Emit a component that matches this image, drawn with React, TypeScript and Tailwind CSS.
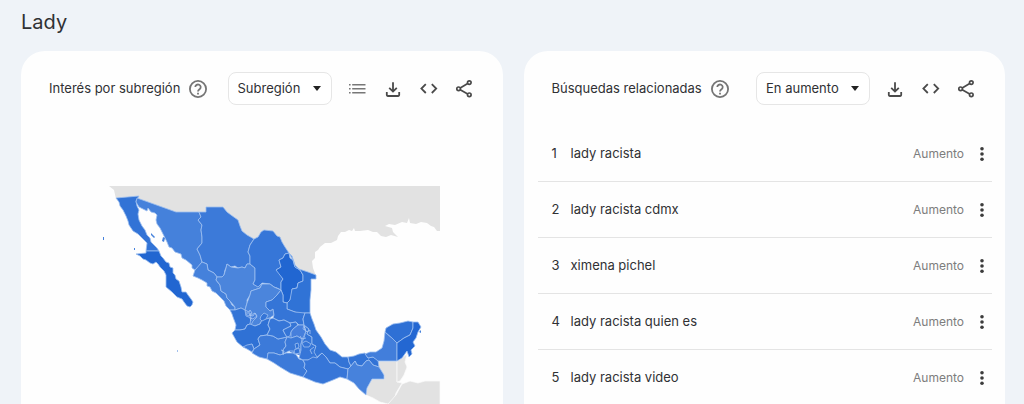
import type { ReactNode } from 'react';

const BASE = '#3a78d9';

const states: { name: string; fill: string; points: string }[] = [
  { name: 'Baja California', fill: '#3273d6', points: '116,198 139,196 136,201 137,206 139,210 138,214 139,220 142,226 145,230 147,235 150,238 151,242 155,246 157,248 159,251 146,251 147,243 144,240 142,238 138,234 133,231 129,225 128,221 126,216 123,210 120,206 119,202' },
  { name: 'Baja California Sur', fill: '#2166d1', points: '146,251 159,251 161,256 163,258 166,262 169,263 170,267 173,268 173,273 175,275 176,279 179,281 181,287 182,292 186,292 188,295 191,299 193,302 192,305 190,307 187,306 184,302 182,299 177,297 172,292 166,287 166,275 164,271 160,267 158,264 156,262 153,264 150,263 146,260 143,259 140,256 136,254 146,253' },
  { name: 'Sonora', fill: '#4581db', points: '137,198 176,212 199,212 201,217 198,220 202,225 201,230 202,237 202,243 197,249 200,255 202,262 199,266 195,270 192,268 192,265 186,260 182,258 181,254 175,252 172,248 169,247 167,242 165,238 162,232 160,228 157,224 156,220 157,215 155,213 151,212 148,208 147,211 143,209 139,207 136,202' },
  { name: 'Chihuahua', fill: '#3c7ad9', points: '199,212 206,212 206,207 223,207 227,212 231,215 238,220 240,226 242,231 247,235 254,239 252,242 250,245 248,252 250,256 250,264 247,264 245,268 242,267 238,268 235,266 231,267 227,264 226,268 225,270 224,275 222,277 217,277 214,273 208,270 207,264 202,262 200,255 197,249 202,243 202,237 201,230 202,225 198,220 201,217' },
  { name: 'Sinaloa', fill: '#4581db', points: '202,262 207,264 208,270 214,273 217,277 216,280 220,285 221,291 226,294 227,298 230,301 232,305 235,307 235,310 230,310 226,306 224,301 220,297 216,293 212,291 210,287 207,286 207,283 202,280 198,278 193,276 195,270' },
  { name: 'Durango', fill: '#4b85dc', points: '222,277 224,275 226,268 227,264 231,267 238,268 242,267 245,268 247,264 250,264 255,268 255,280 253,284 257,286 262,284 260,288 251,291 250,295 247,300 247,303 245,310 241,308 235,310 235,307 230,301 227,298 226,294 221,291 220,285 216,280 217,277' },
  { name: 'Coahuila', fill: '#3676d8', points: '254,239 258,237 261,232 264,230 273,231 277,236 280,237 282,242 285,247 289,253 285,254 283,258 279,260 281,267 276,270 280,274 283,279 281,282 281,290 277,288 274,287 270,284 262,283 258,287 253,284 255,280 255,268 250,264 250,256 248,252 250,245' },
  { name: 'Nuevo León', fill: '#2166d1', points: '289,253 290,258 293,260 295,267 300,270 303,275 303,281 298,283 297,288 292,289 292,295 290,300 287,303 283,302 283,295 281,290 281,282 283,279 276,270 281,267 279,260 283,258 285,254' },
  { name: 'Tamaulipas', fill: '#3073d6', points: '289,253 292,256 295,265 299,269 308,272 316,275 316,279 311,279 311,290 310,300 310,313 305,313 300,314 295,312 287,309 287,303 290,300 292,289 297,288 298,283 303,281 303,275 300,270 295,267 293,260' },
  { name: 'Zacatecas', fill: '#4b85dc', points: '262,284 270,284 274,287 281,290 277,295 272,300 266,302 266,307 270,311 273,309 274,315 270,318 262,320 260,324 255,326 251,325 253,321 257,317 255,313 249,316 245,314 245,310 247,303 250,295 251,291 260,288' },
  { name: 'San Luis Potosí', fill: '#3575d7', points: '281,290 283,295 283,302 287,303 287,309 295,312 305,313 303,319 304,325 299,325 296,322 290,323 284,320 279,321 273,318 274,315 273,309 270,311 266,307 266,302 272,300 277,295' },
  { name: 'Nayarit', fill: '#3374d6', points: '230,310 235,310 241,308 245,310 246,316 251,318 250,324 247,325 245,329 240,330 235,330 236,325 233,317 232,314' },
  { name: 'Jalisco', fill: '#2f71d5', points: '235,330 240,330 245,329 247,325 250,324 255,326 260,324 262,320 270,318 268,325 270,329 267,335 260,336 258,339 260,345 254,349 252,344 247,347 243,347 237,342 232,333' },
  { name: 'Colima', fill: '#3b79d8', points: '243,347 247,345 252,344 254,349 252,352 247,349' },
  { name: 'Michoacán', fill: '#3c7ad9', points: '260,336 267,335 273,336 278,339 287,337 285,342 286,346 283,350 283,355 280,355 274,353 268,353 268,357 267,359 259,357 252,353 254,349 260,345 258,339' },
  { name: 'Guanajuato', fill: '#3676d8', points: '270,319 273,318 279,321 284,320 290,323 291,326 287,328 283,330 285,334 287,337 278,339 273,336 267,335 270,329 268,325' },
  { name: 'Guerrero', fill: '#3c7ad9', points: '267,359 268,353 274,353 280,355 286,353 295,353 299,359 303,360 305,364 304,368 307,371 304,376 303,377 290,373 280,367 274,363' },
  { name: 'Querétaro', fill: '#3575d7', points: '283,330 287,328 291,326 290,323 296,322 298,325 293,329 291,332 290,336 287,337 285,334' },
  { name: 'Hidalgo', fill: '#467fdc', points: '291,332 293,329 298,325 304,325 303,329 306,331 304,336 302,339 297,336 291,338' },
  { name: 'Estado de México', fill: '#3b79d8', points: '287,337 291,338 297,336 302,339 301,344 301,349 299,353 294,354 293,351 289,351 283,354 283,350 286,346 285,342' },
  { name: 'Puebla', fill: '#3676d8', points: '304,325 309,329 307,334 312,337 312,344 316,346 315,352 320,355 317,358 308,360 303,360 299,358 301,350 301,344 304,338 306,331' },
  { name: 'Veracruz', fill: '#3374d6', points: '305,313 310,313 312,319 314,324 316,330 321,337 325,344 330,350 336,352 342,357 348,357 349,362 351,366 348,369 340,367 335,363 330,363 326,357 322,353 317,357 314,352 316,346 312,344 312,337 307,334 309,329 304,325 303,319' },
  { name: 'Oaxaca', fill: '#3776d8', points: '303,360 308,360 313,357 317,358 322,353 326,357 330,363 335,363 340,367 348,369 347,379 340,377 333,380 323,384 315,382 303,377 307,371 304,368 305,364' },
  { name: 'Tabasco', fill: '#3273d6', points: '348,357 354,356 359,354 365,353 368,358 373,357 378,360 379,367 373,365 369,360 366,361 362,366 357,365 355,361 351,366 349,362' },
  { name: 'Chiapas', fill: '#4782dc', points: '351,366 355,361 357,365 362,366 366,361 369,360 373,365 379,367 384,375 384,379 372,379 367,388 366,395 359,389 354,383 347,379 348,369' },
  { name: 'Campeche', fill: '#427edb', points: '365,354 370,352 376,352 382,348 384,341 385,332 392,338 397,343 397,361 378,361 373,357 368,358' },
  { name: 'Yucatán', fill: '#2e70d5', points: '385,332 386,328 393,324 400,323 408,321 413,322 413,328 410,335 404,338 397,343 392,338' },
  { name: 'Quintana Roo', fill: '#2367d2', points: '413,322 418,322 421,327 418,332 416,338 413,342 415,346 411,350 412,354 409,357 407,351 402,358 397,361 397,343 404,338 410,335 413,328' },
];

const unitedStates =
  '109,186 440,186 440,231 437,231 434,227 431,226 427,223 421,222 416,224 410,223 409,218 407,223 402,222 395,225 389,224 385,226 392,228 393,232 398,237 391,235 386,237 381,236 377,232 373,232 368,230 360,231 355,231 354,228 352,231 349,230 345,232 341,232 338,236 337,240 331,243 325,243 320,247 318,250 315,252 315,258 312,261 313,268 316,276 308,274 299,271 293,266 290,257 283,248 278,238 271,232 264,231 258,239 247,237 238,227 226,214 222,209 207,208 206,213 176,213 139,199 116,199 114,190';

const southernNeighbours = [
  '378,361 397,361 397,382 402,383 396,393 395,397 388,404 380,402 373,398 366,395 367,388 372,379 384,379 384,375 378,367',
  '397,361 402,358 407,354 405,362 407,367 404,375 400,381 397,382',
  '396,395 402,384 410,381 418,383 425,381 432,381 440,381 440,406 390,406 388,404',
];

function MexicoMap() {
  return (
    <svg viewBox="100 184 342 224" role="img" aria-label="Mapa de interés por subregión en México" className="w-[342px]">
      <polygon fill="#e2e2e2" points={unitedStates} />
      <g fill="#e2e2e2" stroke="#fafafa" strokeWidth="0.7" strokeLinejoin="round">
        {southernNeighbours.map((p) => (
          <polygon key={p} points={p} />
        ))}
      </g>
      <polygon fill={BASE} points="287,328 303,325 312,345 308,358 290,352 284,340" />
      <polygon fill="#427edb" points="236,309 262,305 268,319 252,325 240,322" />
      <g stroke="#9dbff0" strokeWidth="0.8" strokeLinejoin="round">
        {states.map((s) => (
          <polygon key={s.name} points={s.points} fill={s.fill} />
        ))}
        <polygon points="261,316 264,313 268,315 266,319 262,321 260,319" fill="#3575d7" />
        <polygon points="302,343 306,341 311,344 309,347 304,347" fill="#3575d7" />
        <polygon points="295,344 298,343 299,347 296,349" fill="#2f71d5" />
        <polygon points="294,350 299,348 300,353 295,354" fill="#3575d7" />
      </g>
      <path
        fill="none"
        stroke="#a9c7f2"
        strokeWidth="0.8"
        d="M245 310l4 2 1-2 2 3-3 2 4 1 2-3 2 3-4 3-3-1 1 3M246 313l4 0 1 5M304 329l3 3 3-2 0 4M300 336l2 3 4-1M314 347l-4 3 2 4M281 350l3 1-1 4"
      />
      <g fill="#4581db">
        <path d="M103 237h1v3h-1zM151 233l4 4-1 1-3-3zM163 237l2 1-1 4-2-1zM134 248h1v2h-1zM419 332l2-2v3z" />
        <path d="M177 350h1v2h-1z" opacity="0.5" />
      </g>
    </svg>
  );
}

function HelpIcon() {
  return (
    <svg viewBox="0 0 20 20" className="size-5" fill="none" stroke="#757575" strokeWidth="1.8" aria-hidden="true">
      <circle cx="10" cy="10" r="8.1" />
      <path d="M7.3 8.1a2.7 2.6 0 1 1 4.3 2.1c-.9.7-1.6 1.2-1.6 2.4" />
      <path d="M10 13.8v1.7" />
    </svg>
  );
}

function ListIcon() {
  return (
    <svg viewBox="0 0 20 20" className="size-5" stroke="#777777" strokeWidth="1.6" aria-hidden="true">
      <path d="M2 5.7H3.6M2 9.7H3.6M2 13.7H3.6M5.2 5.7h13.3M5.2 9.7h13.3M5.2 13.7h13.3" />
    </svg>
  );
}

function DownloadIcon() {
  return (
    <svg viewBox="0 0 20 20" className="size-5" fill="none" stroke="#4a4a4a" strokeWidth="1.8" aria-hidden="true">
      <path d="M10 3.2v9M6.2 8.8l3.8 3.8 3.8-3.8M3.8 13v3.1q0 .9.9.9h10.6q.9 0 .9-.9V13" />
    </svg>
  );
}

function EmbedIcon() {
  return (
    <svg viewBox="0 0 20 20" className="size-5" fill="none" stroke="#4a4a4a" strokeWidth="1.8" aria-hidden="true">
      <path d="M6.8 5.2L2.4 9.6l4.4 4.4M12.8 5.2l4.4 4.4-4.4 4.4" />
    </svg>
  );
}

function ShareIcon() {
  return (
    <svg viewBox="0 0 20 20" className="size-5" fill="none" stroke="#4a4a4a" strokeWidth="1.7" aria-hidden="true">
      <circle cx="3.6" cy="9.8" r="1.8" />
      <circle cx="14.3" cy="3.6" r="1.8" />
      <circle cx="14.3" cy="15.8" r="1.8" />
      <path d="M5.2 8.9l7.5-4.4M5.2 10.7l7.5 4.2" />
    </svg>
  );
}

function IconButton({ label, children }: { label: string; children: ReactNode }) {
  return (
    <button type="button" aria-label={label} className="flex size-9 items-center justify-center">
      {children}
    </button>
  );
}

function CardHeader({ title, option, width, withList }: { title: string; option: string; width: string; withList?: boolean }) {
  return (
    <header className="flex h-[75px] items-center justify-between pr-5 pl-7">
      <div className="flex items-center gap-2">
        <h2 className="text-[13px] whitespace-nowrap">{title}</h2>
        <button type="button" aria-label={`Ayuda: ${title}`}>
          <HelpIcon />
        </button>
      </div>
      <div className="flex items-center gap-[7px]">
        <div className={`relative ${width}`}>
          <select
            aria-label={title}
            className="h-[33px] w-full appearance-none rounded-lg border border-[#e6e6e6] bg-white pl-[9px] text-[13px]"
          >
            <option>{option}</option>
          </select>
          <svg viewBox="0 0 8 5" className="pointer-events-none absolute top-[14px] right-[11px] h-[5px] w-2" aria-hidden="true">
            <path d="M0 0h8L4 5z" fill="#222222" />
          </svg>
        </div>
        <div className="flex">
          {withList && (
            <IconButton label="Lista">
              <ListIcon />
            </IconButton>
          )}
          <IconButton label="Descargar">
            <DownloadIcon />
          </IconButton>
          <IconButton label="Insertar">
            <EmbedIcon />
          </IconButton>
          <IconButton label="Compartir">
            <ShareIcon />
          </IconButton>
        </div>
      </div>
    </header>
  );
}

const searches = ['lady racista', 'lady racista cdmx', 'ximena pichel', 'lady racista quien es', 'lady racista video'];

export default function App() {
  return (
    <main className="h-screen overflow-hidden bg-[#eff3f8] pr-[19px] pl-[21px] font-['Inter',sans-serif] text-[#303134]">
      <h1 className="flex h-[51px] items-center pb-2 text-[20px]">Lady</h1>
      <div className="grid grid-cols-2 gap-[21px]">
        <section className="rounded-t-3xl bg-[#fefefe]">
          <CardHeader title="Interés por subregión" option="Subregión" width="w-[104px]" withList />
          <div className="pt-[58px] pl-[79px]">
            <MexicoMap />
          </div>
        </section>
        <section className="rounded-t-3xl bg-[#fefefe]">
          <CardHeader title="Búsquedas relacionadas" option="En aumento" width="w-[114px]" />
          <ol className="pr-[13px] pl-[14px]">
            {searches.map((term, i) => (
              <li key={term} className="flex h-14 items-center border-b border-[#e4e4e4] pl-[14px] text-[13px]">
                <span className="w-[19px]">{i + 1}</span>
                <span className="grow">{term}</span>
                <span className="text-[12px] text-[#7d7d7d]">Aumento</span>
                <button type="button" aria-label={`Más opciones: ${term}`} className="ml-2 flex h-8 w-5 items-center justify-center">
                  <svg viewBox="0 0 4 16" className="h-4 w-1" fill="#3c3c3c" aria-hidden="true">
                    <circle cx="2" cy="2.7" r="1.8" />
                    <circle cx="2" cy="8" r="1.8" />
                    <circle cx="2" cy="13.3" r="1.8" />
                  </svg>
                </button>
              </li>
            ))}
          </ol>
        </section>
      </div>
    </main>
  );
}
